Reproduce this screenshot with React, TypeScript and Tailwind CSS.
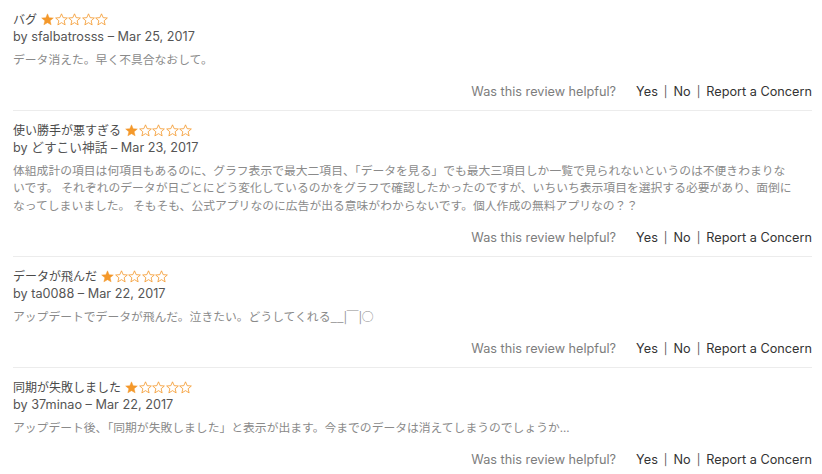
import React from "react";

type Review = {
    title: string;
    author: string;
    date: string;
    body: string[];
};

const reviews: Review[] = [
    {
        title: "バグ",
        author: "sfalbatrosss",
        date: "Mar 25, 2017",
        body: ["データ消えた。早く不具合なおして。"],
    },
    {
        title: "使い勝手が悪すぎる",
        author: "どすこい神話",
        date: "Mar 23, 2017",
        body: [
            "体組成計の項目は何項目もあるのに、グラフ表示で最大二項目、「データを見る」でも最大三項目しか一覧で見られないというのは不便きわまりな",
            "いです。 それぞれのデータが日ごとにどう変化しているのかをグラフで確認したかったのですが、いちいち表示項目を選択する必要があり、面倒に",
            "なってしまいました。 そもそも、公式アプリなのに広告が出る意味がわからないです。個人作成の無料アプリなの？？",
        ],
    },
    {
        title: "データが飛んだ",
        author: "ta0088",
        date: "Mar 22, 2017",
        body: ["アップデートでデータが飛んだ。泣きたい。どうしてくれる__|￣|○"],
    },
    {
        title: "同期が失敗しました",
        author: "37minao",
        date: "Mar 22, 2017",
        body: ["アップデート後、「同期が失敗しました」と表示が出ます。今までのデータは消えてしまうのでしょうか..."],
    },
];

const STAR = "M12 1.5l3.1 7.1 7.7.6-5.9 5.1 1.8 7.6L12 17.8l-6.7 4.1 1.8-7.6-5.9-5.1 7.7-.6z";

function Stars({ rating }: { rating: number }) {
    return (
        <span className="inline-flex items-center gap-[0.5px] ml-[4px]">
            {[0, 1, 2, 3, 4].map((i) => (
                <svg key={i} width="13" height="13" viewBox="0 0 24 24">
                    <path
                        d={STAR}
                        fill={i < rating ? "#f4982a" : "none"}
                        stroke="#f4982a"
                        strokeWidth={i < rating ? 0.8 : 1.5}
                        strokeLinejoin="round"
                    />
                </svg>
            ))}
        </span>
    );
}

function ReviewItem({ review, last }: { review: Review; last: boolean }) {
    return (
        <div className={last ? "pt-[10px]" : "pt-[10px] border-b border-[#ececec]"}>
            <div className="flex items-center h-[18px] pt-[1px] text-[12px] text-[#4a4a4a]">
                <span>{review.title}</span>
                <Stars rating={1} />
            </div>
            <div className="h-[17px] leading-[17px] text-[12.7px] text-[#555]">
                by {review.author} – {review.date}
            </div>
            <div
                className="mt-[4.5px] text-[11.8px] leading-[17.5px] text-[#8a8a8a]"
                style={{ fontFamily: '"Noto Sans CJK JP", sans-serif' }}
            >
                {review.body.map((line, i) => (
                    <div key={i} className="whitespace-nowrap">
                        {line}
                    </div>
                ))}
            </div>
            <div className="mt-[16.5px] mb-[9.5px] flex justify-end items-center h-[17px] text-[12.7px]">
                <span className="text-[#7d7d7d]">Was this review helpful?</span>
                <span className="ml-[20px] text-[#333]">Yes</span>
                <span className="mx-[6px] text-[#555] text-[11px]">|</span>
                <span className="text-[#333]">No</span>
                <span className="mx-[6px] text-[#555] text-[11px]">|</span>
                <span className="text-[#333]">Report a Concern</span>
            </div>
        </div>
    );
}

export default function App() {
    return (
        <div
            className="w-[822px] h-[474px] overflow-hidden bg-white pl-[13px] pr-[10px]"
            style={{ fontFamily: 'Inter, "Noto Sans CJK JP", sans-serif' }}
        >
            {reviews.map((r, i) => (
                <ReviewItem key={i} review={r} last={i === reviews.length - 1} />
            ))}
        </div>
    );
}
